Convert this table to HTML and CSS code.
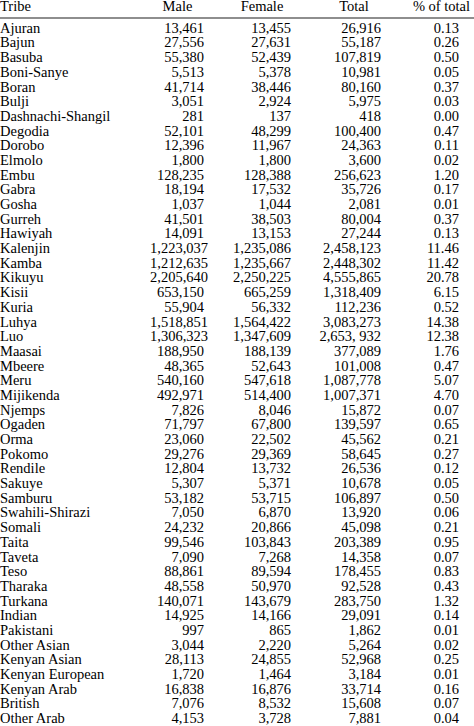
FILE: index.html
```html
<!DOCTYPE html>
<html>
<head>
<meta charset="utf-8">
<link rel="stylesheet" href="styles.css">
</head>
<body>
<div class="table">
  <div class="head">
    <div class="hname">Tribe</div>
    <div class="h h-male">Male</div>
    <div class="h h-female">Female</div>
    <div class="h h-total">Total</div>
    <div class="h h-pct">% of total</div>
  </div>
  <div class="body">
    <div>Ajuran</div><div>13,461</div><div>13,455</div><div>26,916</div><div>0.13</div>
    <div>Bajun</div><div>27,556</div><div>27,631</div><div>55,187</div><div>0.26</div>
    <div>Basuba</div><div>55,380</div><div>52,439</div><div>107,819</div><div>0.50</div>
    <div>Boni-Sanye</div><div>5,513</div><div>5,378</div><div>10,981</div><div>0.05</div>
    <div>Boran</div><div>41,714</div><div>38,446</div><div>80,160</div><div>0.37</div>
    <div>Bulji</div><div>3,051</div><div>2,924</div><div>5,975</div><div>0.03</div>
    <div>Dashnachi-Shangil</div><div>281</div><div>137</div><div>418</div><div>0.00</div>
    <div>Degodia</div><div>52,101</div><div>48,299</div><div>100,400</div><div>0.47</div>
    <div>Dorobo</div><div>12,396</div><div>11,967</div><div>24,363</div><div>0.11</div>
    <div>Elmolo</div><div>1,800</div><div>1,800</div><div>3,600</div><div>0.02</div>
    <div>Embu</div><div>128,235</div><div>128,388</div><div>256,623</div><div>1.20</div>
    <div>Gabra</div><div>18,194</div><div>17,532</div><div>35,726</div><div>0.17</div>
    <div>Gosha</div><div>1,037</div><div>1,044</div><div>2,081</div><div>0.01</div>
    <div>Gurreh</div><div>41,501</div><div>38,503</div><div>80,004</div><div>0.37</div>
    <div>Hawiyah</div><div>14,091</div><div>13,153</div><div>27,244</div><div>0.13</div>
    <div>Kalenjin</div><div>1,223,037</div><div>1,235,086</div><div>2,458,123</div><div>11.46</div>
    <div>Kamba</div><div>1,212,635</div><div>1,235,667</div><div>2,448,302</div><div>11.42</div>
    <div>Kikuyu</div><div>2,205,640</div><div>2,250,225</div><div>4,555,865</div><div>20.78</div>
    <div>Kisii</div><div>653,150</div><div>665,259</div><div>1,318,409</div><div>6.15</div>
    <div>Kuria</div><div>55,904</div><div>56,332</div><div>112,236</div><div>0.52</div>
    <div>Luhya</div><div>1,518,851</div><div>1,564,422</div><div>3,083,273</div><div>14.38</div>
    <div>Luo</div><div>1,306,323</div><div>1,347,609</div><div>2,653, 932</div><div>12.38</div>
    <div>Maasai</div><div>188,950</div><div>188,139</div><div>377,089</div><div>1.76</div>
    <div>Mbeere</div><div>48,365</div><div>52,643</div><div>101,008</div><div>0.47</div>
    <div>Meru</div><div>540,160</div><div>547,618</div><div>1,087,778</div><div>5.07</div>
    <div>Mijikenda</div><div>492,971</div><div>514,400</div><div>1,007,371</div><div>4.70</div>
    <div>Njemps</div><div>7,826</div><div>8,046</div><div>15,872</div><div>0.07</div>
    <div>Ogaden</div><div>71,797</div><div>67,800</div><div>139,597</div><div>0.65</div>
    <div>Orma</div><div>23,060</div><div>22,502</div><div>45,562</div><div>0.21</div>
    <div>Pokomo</div><div>29,276</div><div>29,369</div><div>58,645</div><div>0.27</div>
    <div>Rendile</div><div>12,804</div><div>13,732</div><div>26,536</div><div>0.12</div>
    <div>Sakuye</div><div>5,307</div><div>5,371</div><div>10,678</div><div>0.05</div>
    <div>Samburu</div><div>53,182</div><div>53,715</div><div>106,897</div><div>0.50</div>
    <div>Swahili-Shirazi</div><div>7,050</div><div>6,870</div><div>13,920</div><div>0.06</div>
    <div>Somali</div><div>24,232</div><div>20,866</div><div>45,098</div><div>0.21</div>
    <div>Taita</div><div>99,546</div><div>103,843</div><div>203,389</div><div>0.95</div>
    <div>Taveta</div><div>7,090</div><div>7,268</div><div>14,358</div><div>0.07</div>
    <div>Teso</div><div>88,861</div><div>89,594</div><div>178,455</div><div>0.83</div>
    <div>Tharaka</div><div>48,558</div><div>50,970</div><div>92,528</div><div>0.43</div>
    <div>Turkana</div><div>140,071</div><div>143,679</div><div>283,750</div><div>1.32</div>
    <div>Indian</div><div>14,925</div><div>14,166</div><div>29,091</div><div>0.14</div>
    <div>Pakistani</div><div>997</div><div>865</div><div>1,862</div><div>0.01</div>
    <div>Other Asian</div><div>3,044</div><div>2,220</div><div>5,264</div><div>0.02</div>
    <div>Kenyan Asian</div><div>28,113</div><div>24,855</div><div>52,968</div><div>0.25</div>
    <div>Kenyan European</div><div>1,720</div><div>1,464</div><div>3,184</div><div>0.01</div>
    <div>Kenyan Arab</div><div>16,838</div><div>16,876</div><div>33,714</div><div>0.16</div>
    <div>British</div><div>7,076</div><div>8,532</div><div>15,608</div><div>0.07</div>
    <div>Other Arab</div><div>4,153</div><div>3,728</div><div>7,881</div><div>0.04</div>
  </div>
</div>
</body>
</html>
```

FILE: styles.css
```css
html, body {
  margin: 0;
  padding: 0;
  background: #ffffff;
}
body {
  font-family: "Liberation Serif", "Times New Roman", serif;
  font-size: 14.5px;
  line-height: 14.68px;
  color: #000000;
  overflow: hidden;
}
.table {
  width: 474px;
}
.head,
.body {
  display: grid;
  grid-template-columns: 150px 55px 86px 90px 78px;
  width: 459px;
}
.head {
  line-height: 12px;
  padding-bottom: 4.5px;
  border-bottom: 2px solid #8e8e8e;
  width: 474px;
  grid-template-columns: 150px 55px 86px 90px 78px 15px;
}
.hname {
  white-space: nowrap;
}
.h {
  justify-self: end;
  display: flex;
  justify-content: center;
  white-space: nowrap;
}
.h-male { width: 55px; }
.h-female { width: 58px; }
.h-total { width: 54px; }
.h-pct {
  width: 29px;
  margin-right: 3px;
}
.body {
  padding-top: 2.3px;
}
.body > div {
  white-space: nowrap;
  text-align: right;
}
.body > div:nth-child(5n+1) {
  text-align: left;
}
.body > div:nth-child(5n+2) {
  padding-right: 1px;
}
```
